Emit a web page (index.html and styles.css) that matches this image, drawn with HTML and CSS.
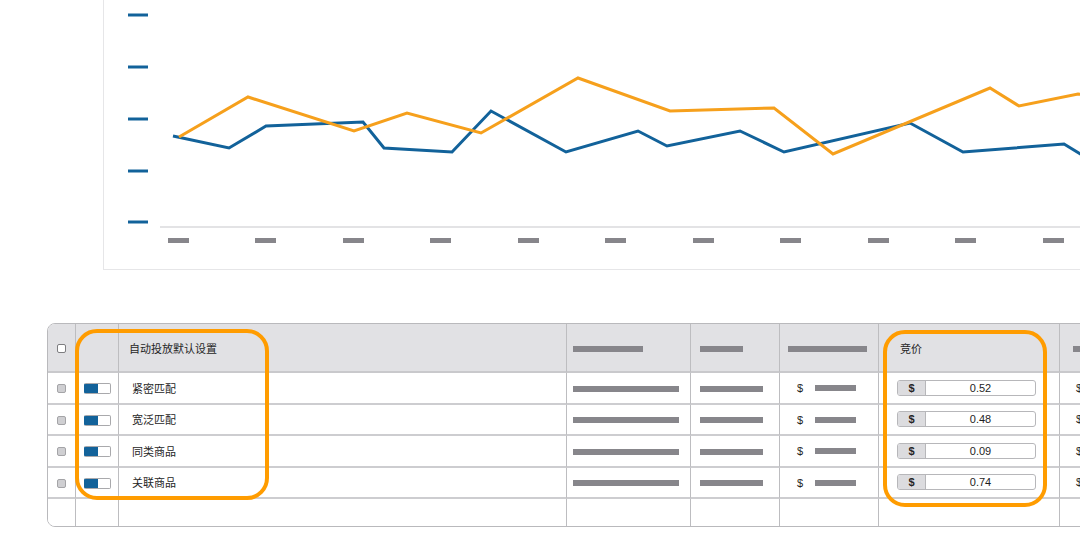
FILE: index.html
```html
<!DOCTYPE html>
<html lang="zh-CN">
<head>
    <meta charset="UTF-8">
    <meta name="viewport" content="width=device-width, initial-scale=1.0">
    <title>自动投放默认设置</title>
    <link rel="stylesheet" href="styles.css">
</head>
<body>

<div class="chart-panel">
    <svg class="chart" width="976" height="269" viewBox="104 0 976 269">
        <!-- y 轴刻度 -->
        <g class="y-ticks">
            <line x1="128" y1="15" x2="148" y2="15"/>
            <line x1="128" y1="67" x2="148" y2="67"/>
            <line x1="128" y1="119" x2="148" y2="119"/>
            <line x1="128" y1="171" x2="148" y2="171"/>
            <line x1="128" y1="222" x2="148" y2="222"/>
        </g>
        <line class="baseline" x1="160" y1="227" x2="1080" y2="227"/>
        <!-- x 轴标签占位 -->
        <g class="x-labels">
            <rect x="168" y="238" width="21" height="5"/>
            <rect x="255" y="238" width="21" height="5"/>
            <rect x="343" y="238" width="21" height="5"/>
            <rect x="430" y="238" width="21" height="5"/>
            <rect x="518" y="238" width="21" height="5"/>
            <rect x="605" y="238" width="21" height="5"/>
            <rect x="693" y="238" width="21" height="5"/>
            <rect x="780" y="238" width="21" height="5"/>
            <rect x="868" y="238" width="21" height="5"/>
            <rect x="955" y="238" width="21" height="5"/>
            <rect x="1043" y="238" width="21" height="5"/>
        </g>
        <polyline class="series-blue" points="173,136 229,148 266,126 363,122 384,148 452,152 491,111 566,152 638,131 667,146 740,131 784,152 910,123 963,152 1064,144 1090,160"/>
        <polyline class="series-orange" points="179,137 248,97 354,131 407,113 481,133 578,78 670,111 774,108 833,154 990,88 1019,106 1078,94 1090,96"/>
    </svg>
</div>

<div class="table-area">
    <div class="table-wrap">
        <table class="targets">
            <colgroup>
                <col style="width: 28px">
                <col style="width: 43px">
                <col style="width: 448px">
                <col style="width: 124px">
                <col style="width: 89px">
                <col style="width: 99px">
                <col style="width: 181px">
                <col style="width: 130px">
            </colgroup>
            <thead>
                <tr>
                    <th class="center"><span class="check check-head"></span></th>
                    <th></th>
                    <th class="name">自动投放默认设置</th>
                    <th class="pad-7"><span class="bar" style="width: 70px"></span></th>
                    <th class="pad-9"><span class="bar" style="width: 43px"></span></th>
                    <th class="pad-8"><span class="bar" style="width: 79px"></span></th>
                    <th class="bid-head">竞价</th>
                    <th class="pad-13"><span class="bar" style="width: 40px"></span></th>
                </tr>
            </thead>
            <tbody>
                <tr>
                    <td class="center"><span class="check"></span></td>
                    <td class="center"><span class="toggle"></span></td>
                    <td class="name">紧密匹配</td>
                    <td class="pad-7"><span class="bar" style="width: 106px"></span></td>
                    <td class="pad-9"><span class="bar" style="width: 63px"></span></td>
                    <td class="money"><span class="cur">$</span><span class="bar" style="width: 41px"></span></td>
                    <td class="bid"><div class="bid-input"><span class="addon">$</span><span class="value">0.52</span></div></td>
                    <td class="money-last">$</td>
                </tr>
                <tr>
                    <td class="center"><span class="check"></span></td>
                    <td class="center"><span class="toggle"></span></td>
                    <td class="name">宽泛匹配</td>
                    <td class="pad-7"><span class="bar" style="width: 106px"></span></td>
                    <td class="pad-9"><span class="bar" style="width: 63px"></span></td>
                    <td class="money"><span class="cur">$</span><span class="bar" style="width: 41px"></span></td>
                    <td class="bid"><div class="bid-input"><span class="addon">$</span><span class="value">0.48</span></div></td>
                    <td class="money-last">$</td>
                </tr>
                <tr>
                    <td class="center"><span class="check"></span></td>
                    <td class="center"><span class="toggle"></span></td>
                    <td class="name">同类商品</td>
                    <td class="pad-7"><span class="bar" style="width: 106px"></span></td>
                    <td class="pad-9"><span class="bar" style="width: 63px"></span></td>
                    <td class="money"><span class="cur">$</span><span class="bar" style="width: 41px"></span></td>
                    <td class="bid"><div class="bid-input"><span class="addon">$</span><span class="value">0.09</span></div></td>
                    <td class="money-last">$</td>
                </tr>
                <tr>
                    <td class="center"><span class="check"></span></td>
                    <td class="center"><span class="toggle"></span></td>
                    <td class="name">关联商品</td>
                    <td class="pad-7"><span class="bar" style="width: 106px"></span></td>
                    <td class="pad-9"><span class="bar" style="width: 63px"></span></td>
                    <td class="money"><span class="cur">$</span><span class="bar" style="width: 41px"></span></td>
                    <td class="bid"><div class="bid-input"><span class="addon">$</span><span class="value">0.74</span></div></td>
                    <td class="money-last">$</td>
                </tr>
                <tr class="empty">
                    <td></td><td></td><td></td><td></td><td></td><td></td><td></td><td></td>
                </tr>
            </tbody>
        </table>
    </div>

    <!-- 橙色高亮框 -->
    <div class="highlight highlight-settings"></div>
    <div class="highlight highlight-bid"></div>
</div>

</body>
</html>
```

FILE: styles.css
```css
body, html {
    margin: 0;
    padding: 0;
    width: 100%;
    height: 100%;
    background-color: #fff;
    color: #262626;
    font-family: "Liberation Sans", "Noto Sans CJK SC", sans-serif;
    overflow: hidden;
}
.chart-panel {
    margin-left: 103px;
    height: 269px;
    border-left: 1px solid #e6e6e8;
    border-bottom: 1px solid #e6e6e8;
}
.chart {
    display: block;
}
.y-ticks line {
    stroke: #12629a;
    stroke-width: 3;
}
.baseline {
    stroke: #e3e3e5;
    stroke-width: 2;
}
.x-labels rect {
    fill: #87868b;
}
.series-blue, .series-orange {
    fill: none;
    stroke-width: 3;
    stroke-linejoin: miter;
}
.series-blue {
    stroke: #12629a;
}
.series-orange {
    stroke: #f6a01c;
}

.table-area {
    position: relative;
    margin: 53px 0 0 47px;
}
.table-wrap {
    width: 1150px;
    border: 1px solid #b9b9bc;
    border-radius: 8px;
    overflow: hidden;
}
.targets {
    border-collapse: separate;
    border-spacing: 0;
    table-layout: fixed;
    width: 1142px;
    font-size: 11px;
}
.targets th, .targets td {
    padding: 0;
    border-right: 1px solid #bdbdc0;
    border-bottom: 1px solid #bdbdc0;
    vertical-align: middle;
    text-align: left;
    font-weight: normal;
    white-space: nowrap;
}
.targets thead th {
    height: 47px;
    background-color: #e1e1e4;
    border-bottom: 2px solid #c9c9cc;
}
.targets tbody td {
    height: 29.5px;
    background-color: #fff;
    border-bottom: 2px solid #cdcdd0;
}
.targets tbody tr.empty td {
    height: 27px;
    border-bottom: none;
}
.center {
    text-align: center !important;
}
.name {
    padding-left: 13px !important;
    font-size: 11px;
}
th.name {
    padding-left: 10px !important;
}
.pad-7 { padding-left: 6px !important; }
.pad-8 { padding-left: 8px !important; }
.pad-9 { padding-left: 9px !important; }
.pad-13 { padding-left: 13px !important; }

.bar {
    display: inline-block;
    height: 6px;
    background-color: #87868b;
    vertical-align: middle;
}
.check {
    display: inline-block;
    width: 7px;
    height: 7px;
    border: 1px solid #a4a4a7;
    border-radius: 2px;
    background-color: #cfcfd2;
    vertical-align: middle;
}
.check-head {
    background-color: #fff;
    border-color: #7d7d80;
}
.toggle {
    display: inline-block;
    width: 27px;
    height: 11px;
    box-sizing: border-box;
    border: 1px solid #a9a9ac;
    border-left-color: #12629a;
    border-radius: 2px;
    background: linear-gradient(90deg, #12629a 0, #12629a 13px, #fff 13px);
    vertical-align: middle;
}
.money {
    padding-left: 17px !important;
}
.money .cur {
    display: inline-block;
    width: 18px;
    vertical-align: middle;
}
.money-last {
    padding-left: 16px !important;
}
.bid-head {
    padding-left: 21px !important;
}
.bid {
    padding-left: 18px !important;
}
.bid-input {
    display: flex;
    width: 139px;
    height: 16px;
    box-sizing: border-box;
    border: 1px solid #b7b7ba;
    border-radius: 3px;
    background-color: #fff;
    overflow: hidden;
}
.bid-input .addon {
    width: 27px;
    border-right: 1px solid #b7b7ba;
    background-color: #dcdcdf;
    text-align: center;
    font-weight: bold;
    line-height: 14px;
}
.bid-input .value {
    flex: 1;
    text-align: center;
    line-height: 14px;
    color: #1e1e1e;
}

.highlight {
    position: absolute;
    box-sizing: border-box;
    border: 4px solid #ff9c00;
    border-radius: 22px;
}
.highlight-settings {
    left: 28px;
    top: 6px;
    width: 194px;
    height: 171px;
}
.highlight-bid {
    left: 836px;
    top: 7px;
    width: 164px;
    height: 177px;
}
```
